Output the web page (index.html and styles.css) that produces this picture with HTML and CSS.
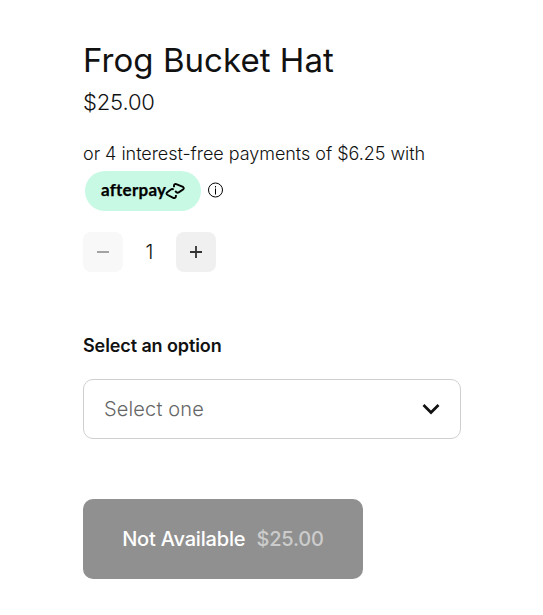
FILE: index.html
```html
<!DOCTYPE html>
<html lang="en">
<head>
<meta charset="utf-8">
<title>Frog Bucket Hat</title>
<link rel="stylesheet" href="styles.css">
</head>
<body>
<main class="product">
  <h1 class="title">Frog Bucket Hat</h1>
  <p class="price">$25.00</p>
  <div class="installments">
    <p class="terms">or 4 interest-free payments of $6.25 with</p>
    <div class="provider">
      <span class="badge"><span class="brand">afterpay</span><svg class="loop" width="20" height="18" viewBox="0 0 20 18"><path d="M9 5.2V3.6Q9.2 1.6 11.2 2.1L18 4.9Q19.6 6.1 18 7.5L13.7 10.4Q12.4 11.2 11.2 10L10.2 8.9"/><path d="M8.7 7.6Q7.3 6.4 5.9 7.4L2.3 10.2Q.7 11.6 2.3 12.8L8.2 15.8Q10.4 16.5 10.9 14.5V13"/></svg></span>
      <svg class="info" width="16" height="16" viewBox="0 0 16 16"><circle cx="7.5" cy="7" r="7"/><path d="M7.5 5.5v6M7.5 3v1.5"/></svg>
    </div>
  </div>
  <div class="quantity">
    <button class="step step-off" aria-label="Decrease"><svg width="14" height="14" viewBox="0 0 14 14"><path d="M1 7h12"/></svg></button>
    <span class="count">1</span>
    <button class="step" aria-label="Increase"><svg width="14" height="14" viewBox="0 0 14 14"><path d="M1 7h12M7 1v12"/></svg></button>
  </div>
  <h2 class="label">Select an option</h2>
  <div class="select"><span>Select one</span><svg width="18" height="12" viewBox="0 0 18 12"><path d="M1.5 2L9 9.5L16.5 2"/></svg></div>
  <button class="buy"><span>Not Available</span><span class="buy-price">$25.00</span></button>
</main>
</body>
</html>
```
FILE: styles.css
```css
* { box-sizing: border-box; margin: 0; padding: 0; }
body { background: #fff; color: #111; font-family: Inter, sans-serif; }
button { border: 0; font: inherit; color: inherit; }
svg { display: block; fill: none; stroke: #111; overflow: visible; }
.product { width: 461px; padding: 40px 0 0 83px; }
.title { font-size: 33px; line-height: 40px; font-weight: 400; white-space: nowrap; letter-spacing: 0.04px; }
.price { margin-top: 8px; font-size: 22px; line-height: 28px; font-weight: 300; letter-spacing: -0.15px; }
.installments { margin-top: 26px; }
.terms { font-size: 18px; line-height: 24px; font-weight: 300; letter-spacing: -0.035px; white-space: nowrap; }
.provider { display: flex; align-items: center; gap: 7px; margin: 5px 0 0 2px; }
.badge { display: flex; align-items: center; width: 116px; height: 40px; padding-left: 16px; border-radius: 20px; background: #c8f9e4; }
.brand { margin-top: -2px; font: 700 17px/20px Lato, sans-serif; width: 64px; letter-spacing: 0.25px; color: #000; -webkit-text-stroke: 0.25px #000; }
.loop { stroke: #000; stroke-width: 1.9; }
.info { stroke: #000; }
.quantity { display: flex; align-items: center; margin-top: 21px; }
.step { display: flex; align-items: center; justify-content: center; width: 40px; height: 40px; border-radius: 8px; background: #f0f0f0; }
.step svg { stroke-width: 1.8; stroke: #333; }
.step-off { background: #f8f8f8; }
.step-off svg { stroke: #999; }
.count { width: 53px; text-align: center; font-size: 20px; font-weight: 300; }
.label { margin-top: 62px; font-size: 18px; line-height: 24px; font-weight: 600; letter-spacing: -0.1px; }
.select { display: flex; align-items: center; justify-content: space-between; width: 378px; height: 60px; margin-top: 21px; padding: 0 20px; border: 1px solid #cfcfcf; border-radius: 10px; font-size: 20px; font-weight: 300; letter-spacing: 0.15px; color: #666; }
.select svg { stroke-width: 2.7; }
.buy { display: flex; align-items: center; justify-content: center; gap: 11px; width: 280px; height: 80px; margin-top: 60px; border-radius: 10px; background: #909090; color: #fff; font-size: 20px; font-weight: 450; letter-spacing: -0.17px; }
.buy-price { color: #ccc; }
```
